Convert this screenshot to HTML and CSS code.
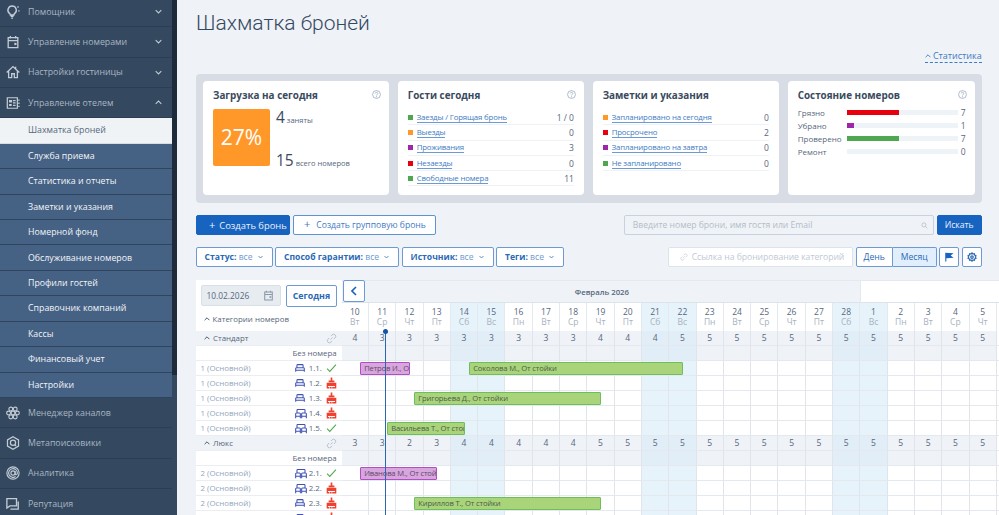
FILE: index.html
```html
<!DOCTYPE html>
<html lang="ru">

<head>
  <meta charset="utf-8">
  <title>Шахматка броней</title>
  <link rel="stylesheet" href="styles.css">
</head>

<body>
  <svg class="sprite" width="0" height="0">
    <symbol id="i-bulb" viewBox="0 0 16 16"><path d="M7 1.200a4.800 4.800 0 0 0-2.800 8.700c.5.4.8.9.8 1.500h4c0-.6.3-1.100.8-1.500A4.800 4.800 0 0 0 7 1.200zM5.300 13h3.400M6 15h2" fill="none" stroke="currentColor" stroke-width="1.600"/><path d="M13 1.500h1.500V3H13zM14 6h1.500v1.500H14z" fill="currentColor"/></symbol>
    <symbol id="i-cal" viewBox="0 0 16 16"><path d="M2.500 3h11v11.500h-11zM2.500 6.500h11M5 1v3M11 1v3" fill="none" stroke="currentColor" stroke-width="1.500"/><path d="M9.500 9h2.500v2.500H9.500z" fill="currentColor"/></symbol>
    <symbol id="i-house" viewBox="0 0 16 16"><path d="M.8 8.500 8 1.800l7.200 6.700M3 7v7.500h3.500V10h3v4.500H13V7M11 2v2.500" fill="none" stroke="currentColor" stroke-width="1.500"/></symbol>
    <symbol id="i-board" viewBox="0 0 16 16"><path d="M1.500 2h11.500v12H1.500z" fill="none" stroke="currentColor" stroke-width="1.400"/><path d="M3.500 4.500h3.500v3H3.500zM8 4.500h3v1.500H8zM8 7h3v1.500H8zM3.500 9h3v2.500h-3zM8 10h3v1.500H8zM14 4h1.500v1.500H14zM14 7.500h1.500V9H14zM14 11h1.500v1.500H14z" fill="currentColor"/></symbol>
    <symbol id="i-net" viewBox="0 0 16 16"><g fill="none" stroke="currentColor" stroke-width="1.300"><circle cx="5.500" cy="3.500" r="2.200"/><circle cx="10.500" cy="3.500" r="2.200"/><circle cx="3" cy="8" r="2.200"/><circle cx="8" cy="8" r="2.200"/><circle cx="13" cy="8" r="2.200"/><circle cx="5.500" cy="12.500" r="2.200"/><circle cx="10.500" cy="12.500" r="2.200"/></g></symbol>
    <symbol id="i-hex" viewBox="0 0 16 16"><path d="M8 .8l6.300 3.600v7.200L8 15.200l-6.300-3.600V4.400z" fill="none" stroke="currentColor" stroke-width="1.400"/><circle cx="8" cy="7.800" r="3" fill="none" stroke="currentColor" stroke-width="1.400"/><path d="M10 10l1.500 1.500" stroke="currentColor" stroke-width="1.400"/></symbol>
    <symbol id="i-at" viewBox="0 0 16 16"><g fill="none" stroke="currentColor" stroke-width="1.300"><circle cx="8" cy="8" r="7"/><circle cx="8" cy="8" r="2.400"/><path d="M10.400 5.800v3c0 1.700 2.600 1.700 2.600-.8A5 5 0 1 0 11 12"/></g></symbol>
    <symbol id="i-chat" viewBox="0 0 16 16"><path d="M1 1.800h11v8.400H4.500L1 12.500zM14 5v8.800h-9" fill="none" stroke="currentColor" stroke-width="1.500"/></symbol>
    <symbol id="i-help" viewBox="0 0 16 16"><circle cx="8" cy="8" r="7" fill="none" stroke="currentColor" stroke-width="1.200"/><path d="M5.800 6.200C5.800 3.500 10.300 3.500 10.300 6.200c0 1.800-2.300 1.800-2.300 3.600" fill="none" stroke="currentColor" stroke-width="1.200"/><circle cx="8" cy="11.800" r=".9" fill="currentColor"/></symbol>
    <symbol id="i-link" viewBox="0 0 16 16"><path d="M6.500 9.500l3-3M7 4.500l1.800-1.800a3 3 0 0 1 4.400 4.300L11.400 8.800M9 11.500l-1.800 1.800A3 3 0 0 1 2.800 9l1.800-1.800" fill="none" stroke="currentColor" stroke-width="1.400"/></symbol>
    <symbol id="i-bed" viewBox="0 0 16 13"><path d="M3 6V2a1 1 0 0 1 1-1h8a1 1 0 0 1 1 1v4M1 12.500V7.500A1.500 1.500 0 0 1 2.500 6h11A1.500 1.500 0 0 1 15 7.500v5M1 10h14" fill="none" stroke="currentColor" stroke-width="1.700"/></symbol>
    <symbol id="i-beds" viewBox="0 0 18 16"><path d="M3 7V3a1 1 0 0 1 1-1h10a1 1 0 0 1 1 1v4M1 15V8.500A1.200 1.200 0 0 1 2.200 7.300h4.600A1.200 1.200 0 0 1 8 8.500V15M10 15V8.500a1.200 1.200 0 0 1 1.200-1.200h4.600A1.200 1.200 0 0 1 17 8.500V15M1 12h7M10 12h7" fill="none" stroke="currentColor" stroke-width="1.600"/></symbol>
    <symbol id="i-broom" viewBox="0 0 16 16"><path d="M6.800 0h2.400v4.500h3V7H3.800V4.500h3zM1 7.800h14V16H1z" fill="#f0402f"/><path d="M3 12.500h10v1.400H3zM4.500 14h1.200v2H4.500zM8 14h1.200v2H8z" fill="#fff"/></symbol>
    <symbol id="i-check" viewBox="0 0 16 16"><path d="M1.500 9l4 4L14.500 3" fill="none" stroke="#55a84f" stroke-width="1.500"/></symbol>
    <symbol id="i-chev" viewBox="0 0 10 6"><path d="M1 1l4 4 4-4" fill="none" stroke="currentColor" stroke-width="1.500"/></symbol>
    <symbol id="i-up" viewBox="0 0 10 6"><path d="M1 5l4-4 4 4" fill="none" stroke="currentColor" stroke-width="1.500"/></symbol>
  </svg>

  <aside class="sidebar">
    <nav class="nav">
      <a class="nav-item"><svg class="nav-icon"><use href="#i-bulb"/></svg>Помощник<svg class="nav-arrow"><use href="#i-chev"/></svg></a>
      <a class="nav-item"><svg class="nav-icon"><use href="#i-cal"/></svg>Управление номерами<svg class="nav-arrow"><use href="#i-chev"/></svg></a>
      <a class="nav-item"><svg class="nav-icon"><use href="#i-house"/></svg>Настройки гостиницы<svg class="nav-arrow"><use href="#i-chev"/></svg></a>
      <a class="nav-item"><svg class="nav-icon"><use href="#i-board"/></svg>Управление отелем<svg class="nav-arrow"><use href="#i-up"/></svg></a>
      <a class="nav-sub active">Шахматка броней</a>
      <a class="nav-sub">Служба приема</a>
      <a class="nav-sub">Статистика и отчеты</a>
      <a class="nav-sub">Заметки и указания</a>
      <a class="nav-sub">Номерной фонд</a>
      <a class="nav-sub">Обслуживание номеров</a>
      <a class="nav-sub">Профили гостей</a>
      <a class="nav-sub">Справочник компаний</a>
      <a class="nav-sub">Кассы</a>
      <a class="nav-sub">Финансовый учет</a>
      <a class="nav-sub">Настройки</a>
      <a class="nav-item"><svg class="nav-icon"><use href="#i-net"/></svg>Менеджер каналов</a>
      <a class="nav-item"><svg class="nav-icon"><use href="#i-hex"/></svg>Метапоисковики</a>
      <a class="nav-item"><svg class="nav-icon"><use href="#i-at"/></svg>Аналитика</a>
      <a class="nav-item"><svg class="nav-icon"><use href="#i-chat"/></svg>Репутация</a>
    </nav>
    <div class="scrollbar"></div>
  </aside>

  <main class="main">
    <h1 class="title">Шахматка броней</h1>
    <div class="stats-toggle"><a><svg class="stats-arrow"><use href="#i-up"/></svg>Статистика</a></div>

    <section class="stats">
      <div class="card">
        <svg class="help"><use href="#i-help"/></svg>
        <h3>Загрузка на сегодня</h3>
        <div class="load">
          <div class="load-box">27%</div>
          <div class="load-nums">
            <div><b>4</b> заняты</div>
            <div><b>15</b> всего номеров</div>
          </div>
        </div>
      </div>
      <div class="card">
        <svg class="help"><use href="#i-help"/></svg>
        <h3>Гости сегодня</h3>
        <ul class="list">
          <li><i class="green"></i><a>Заезды / Горящая бронь</a><span>1 / 0</span></li>
          <li><i class="orange"></i><a>Выезды</a><span>0</span></li>
          <li><i class="purple"></i><a>Проживания</a><span>3</span></li>
          <li><i class="red"></i><a>Незаезды</a><span>0</span></li>
          <li><i class="green"></i><a>Свободные номера</a><span>11</span></li>
        </ul>
      </div>
      <div class="card">
        <h3>Заметки и указания</h3>
        <ul class="list">
          <li><i class="orange"></i><a>Запланировано на сегодня</a><span>0</span></li>
          <li><i class="red"></i><a>Просрочено</a><span>2</span></li>
          <li><i class="purple"></i><a>Запланировано на завтра</a><span>0</span></li>
          <li><i class="green"></i><a>Не запланировано</a><span>0</span></li>
        </ul>
      </div>
      <div class="card">
        <svg class="help"><use href="#i-help"/></svg>
        <h3>Состояние номеров</h3>
        <div class="state"><span>Грязно</span><div class="bar"><i class="red" style="width:47%"></i></div><span>7</span></div>
        <div class="state"><span>Убрано</span><div class="bar"><i class="purple" style="width:7%"></i></div><span>1</span></div>
        <div class="state"><span>Проверено</span><div class="bar"><i class="green" style="width:47%"></i></div><span>7</span></div>
        <div class="state"><span>Ремонт</span><div class="bar"></div><span>0</span></div>
      </div>
    </section>

    <div class="toolbar">
      <button class="btn primary create"><span class="plus">+</span>Создать бронь</button>
      <button class="btn outline group"><span class="plus">+</span>Создать групповую бронь</button>
      <div class="search">
        Введите номер брони, имя гостя или Email
        <svg class="search-icon" viewBox="0 0 12 12"><circle cx="5" cy="5" r="3.500" fill="none" stroke="currentColor" stroke-width="1.300"/><path d="M7.500 7.500L11 11" stroke="currentColor" stroke-width="1.300"/></svg>
      </div>
      <button class="btn primary find">Искать</button>
    </div>

    <div class="toolbar filters">
      <button class="filter"><b>Статус:</b> все<svg class="filter-arrow"><use href="#i-chev"/></svg></button>
      <button class="filter"><b>Способ гарантии:</b> все<svg class="filter-arrow"><use href="#i-chev"/></svg></button>
      <button class="filter"><b>Источник:</b> все<svg class="filter-arrow"><use href="#i-chev"/></svg></button>
      <button class="filter"><b>Теги:</b> все<svg class="filter-arrow"><use href="#i-chev"/></svg></button>
      <button class="cat-link"><svg class="cat-icon"><use href="#i-link"/></svg>Ссылка на бронирование категорий</button>
      <div class="switch"><button>День</button><button class="on">Месяц</button></div>
      <button class="square">
        <svg viewBox="0 0 12 12"><path d="M1.500 1v10.500h1.300V7.500L11.500 7 8 4.200 11.500 1.500z" fill="#1763c0"/></svg>
      </button>
      <button class="square">
        <svg viewBox="0 0 16 16"><g fill="none" stroke="#2a69b5" stroke-width="2"><path d="M8 1.500l1.500 1.700 2.200-.4.500 2.200 2.100 1L13.400 8l1 2-2.100 1-.5 2.200-2.200-.4L8 14.500l-1.500-1.700-2.200.4-.5-2.200-2.100-1 1-2-1-2 2.100-1 .5-2.200 2.200.4z"/><circle cx="8" cy="8" r="2"/></g></svg>
      </button>
    </div>

    <section class="sched" id="sched">
      <div class="sched-top">
        <div class="sched-tools">
          <div class="date-row">
            <div class="date">10.02.2026
              <svg class="date-icon"><use href="#i-cal"/></svg>
            </div>
            <button class="today">Сегодня</button>
          </div>
          <div class="cat-title"><svg class="fold"><use href="#i-up"/></svg>Категории номеров</div>
        </div>
        <div class="sched-head">
          <div class="months">
            <button class="back"><svg viewBox="0 0 6 10"><path d="M5 1L1 5l4 4" fill="none" stroke="#1763c0" stroke-width="1.600"/></svg></button>
            <div class="month">Февраль 2026</div>
            <div class="month-next"></div>
          </div>
          <div class="days" id="days"></div>
        </div>
      </div>
      <div id="rows"></div>
      <div class="now"></div>
    </section>
  </main>

  <script src="app.js"></script>
</body>

</html>
```

FILE: styles.css
```css
* {
  box-sizing: border-box;
}

html,
body {
  height: 515px;
  margin: 0;
  overflow: hidden;
}

body {
  display: flex;
  background-color: #eff2f6;
  font-family: "Open Sans", sans-serif;
  font-size: 9px;
  color: #3a4a5e;
}

a {
  color: inherit;
}

button {
  font-family: inherit;
  cursor: pointer;
}

.sprite {
  position: absolute;
}

/* sidebar */

.sidebar {
  display: flex;
  flex: 0 0 177px;
  height: 515px;
  background-color: #34495f;
}

.nav {
  width: 172px;
  margin-top: -3px;
}

.nav-item {
  display: flex;
  align-items: center;
  height: 30.3px;
  padding-left: 6px;
  border-bottom: 1px solid #2b3e53;
  font-size: 8.800px;
  color: #a9b5c3;
}

.nav-icon {
  width: 14px;
  height: 14px;
  margin-right: 8px;
  color: #c3ccd6;
}

.nav-arrow {
  width: 7px;
  height: 5px;
  margin-left: auto;
  margin-right: 10px;
  color: #c3ccd6;
}

.nav-sub {
  display: flex;
  align-items: center;
  height: 25.45px;
  padding-left: 28px;
  border-bottom: 1px solid #2f455f;
  background-color: #456184;
  font-size: 8.800px;
  font-weight: 500;
  color: #f2f5f8;
}

.nav-sub.active {
  background-color: #f0f3f6;
  border-bottom-color: #d8dde4;
  font-weight: 400;
  color: #56677c;
}

.scrollbar {
  width: 5px;
  height: 375px;
  background-color: #1e2b3a;
}

/* main */

.main {
  flex: 1;
  min-width: 0;
  padding: 0 17.300px 0 18.500px;
}

.title {
  height: 50px;
  margin: 0;
  padding: 8px 0 0 .5px;
  font-family: Roboto, sans-serif;
  font-size: 21px;
  font-weight: 300;
  line-height: 30px;
  color: #34495f;
}

.stats-toggle {
  display: flex;
  justify-content: flex-end;
  height: 24px;
}

.stats-toggle a {
  height: 13px;
  border-bottom: 1px dashed #3e7bc4;
  font-size: 9px;
  line-height: 11px;
  color: #3e7bc4;
}

.stats-arrow {
  width: 6px;
  height: 4px;
  margin: 0 2px 1px 0;
}

.stats {
  display: grid;
  grid-template-columns: 186px 186.300px 186.300px 187px;
  gap: 8.700px;
  width: 786.200px;
  height: 129px;
  padding: 7px 7.500px;
  border-radius: 4px;
  background-color: #d8dce4;
}

.card {
  position: relative;
  height: 114px;
  padding: 8px 10px 0;
  border-radius: 4px;
  background-color: #fff;
}

.card h3 {
  margin: 0 0 8px;
  font-size: 9.900px;
  font-weight: 700;
  line-height: 13px;
  color: #3a4a5e;
}

.help {
  position: absolute;
  top: 9px;
  right: 8px;
  width: 9px;
  height: 9px;
  color: #8b9db3;
}

.load {
  display: flex;
  margin-top: -1px;
}

.load-box {
  flex: 0 0 57px;
  height: 57px;
  border-radius: 2px;
  background-color: #ff9829;
  font-size: 21px;
  line-height: 57px;
  text-align: center;
  color: #fff;
}

.load-nums {
  display: flex;
  flex-direction: column;
  justify-content: space-between;
  height: 59px;
  padding-left: 6px;
  font-size: 7.500px;
  color: #56677c;
}

.load-nums b {
  font-size: 15.500px;
  font-weight: 400;
  line-height: 16px;
  color: #3a4a5e;
}

.list {
  margin: 0;
  padding: 0;
  list-style: none;
}

.list li {
  display: flex;
  align-items: center;
  height: 15.3px;
  border-bottom: 1px solid #eef2f6;
  font-size: 8.500px;
}

.list i {
  flex: 0 0 5px;
  height: 5px;
  margin-right: 4px;
}

.list a {
  border-bottom: 1px solid #6d9ad3;
  font-size: 7.800px;
  letter-spacing: -.15px;
  line-height: 10px;
  color: #3e7bc4;
}

.list span {
  margin-left: auto;
  color: #56677c;
}

.green {
  background-color: #4fa84f;
}

.orange {
  background-color: #ff9829;
}

.purple {
  background-color: #9c27a8;
}

.red {
  background-color: #e8000e;
}

.state {
  position: relative;
  top: -4px;
  display: flex;
  align-items: center;
  height: 13px;
  font-size: 8px;
  color: #56677c;
}

.state span:first-child {
  flex: 0 0 49px;
}

.state span:last-child {
  margin-left: 3px;
  font-size: 8.500px;
}

.bar {
  flex: 0 0 111px;
  height: 5px;
  background-color: #eef3f8;
}

.bar i {
  display: block;
  height: 5px;
}

/* toolbars */

.toolbar {
  display: flex;
  align-items: center;
  gap: 2.500px;
  margin-top: 12px;
}

.btn {
  height: 20px;
  padding: 0;
  border-radius: 2px;
  font-size: 8.600px;
  text-align: left;
}

.primary {
  border: 1px solid #1763c0;
  background-color: #1763c0;
  color: #e9f1fa;
}

.outline {
  border: 1px solid #5b93d3;
  background-color: #fff;
  color: #3e7bc4;
}

.create {
  width: 94.500px;
  padding-left: 12.500px;
  font-size: 9.400px;
}

.create .plus {
  margin-right: 4px;
}

.group {
  width: 143px;
  padding-left: 10.500px;
}

.plus {
  margin-right: 6px;
  font-size: 11px;
  line-height: 10px;
}

.search {
  display: flex;
  align-items: center;
  justify-content: space-between;
  width: 310.500px;
  height: 20px;
  margin-left: auto;
  padding: 0 5px 0 8px;
  border: 1px solid #c8d2de;
  border-radius: 2px;
  font-size: 8.600px;
  color: #b3bdc9;
}

.search-icon {
  width: 7px;
  height: 7px;
  color: #b3bdc9;
}

.find {
  width: 45px;
  text-align: center;
}

.filter {
  height: 20px;
  padding: 0 9px 0 8px;
  border: 1px solid #6d9ad3;
  border-radius: 2px;
  background-color: #fff;
  font-size: 8.600px;
  color: #6d9ad3;
  white-space: nowrap;
}

.filter b {
  font-weight: 700;
  color: #2a69b5;
}

.filter-arrow {
  width: 5px;
  height: 4px;
  margin-left: 5px;
  margin-bottom: 1px;
  color: #2a69b5;
}

.cat-link {
  display: flex;
  align-items: center;
  width: 185.500px;
  height: 20px;
  margin-left: auto;
  padding: 0 0 0 11px;
  border: 1px solid #dde3ea;
  border-radius: 2px;
  background-color: #fff;
  font-size: 8.600px;
  color: #c0c9d4;
  white-space: nowrap;
}

.cat-icon {
  flex: none;
  width: 8px;
  height: 8px;
  margin-right: 4px;
  color: #c0c9d4;
}

.switch {
  display: flex;
}

.switch button {
  width: 37px;
  height: 20px;
  padding: 0;
  border: 1px solid #6d9ad3;
  border-radius: 2px 0 0 2px;
  background-color: #fff;
  font-size: 8.600px;
  color: #2a69b5;
}

.switch .on {
  width: 44px;
  border-left: 0;
  border-radius: 0 2px 2px 0;
  background-color: #e0effb;
}

.square {
  width: 20px;
  height: 20px;
  padding: 0 4px;
  border: 1px solid #6d9ad3;
  border-radius: 2px;
  background-color: #fff;
}

.square svg {
  display: block;
  width: 10px;
  height: 10px;
}

/* scheduler */

.sched {
  position: relative;
  width: 804px;
  margin-top: 13px;
}

.sched-top {
  display: flex;
  height: 51px;
}

.sched-tools {
  flex: 0 0 146.200px;
  padding: 5px 5px 0;
  background-color: #fff;
}

.date-row {
  display: flex;
  justify-content: space-between;
}

.date {
  display: flex;
  align-items: center;
  justify-content: space-between;
  width: 80px;
  height: 21px;
  padding: 0 6px 0 5px;
  border: 1px solid #d8dfe7;
  border-radius: 2px;
  background-color: #e7ecf1;
  font-size: 8.400px;
  color: #56677c;
}

.date-icon {
  width: 11px;
  height: 11px;
  color: #8b98a8;
}

.today {
  width: 50.500px;
  height: 22px;
  padding: 0;
  border: 1px solid #6d9ad3;
  border-radius: 2px;
  background-color: #fff;
  font-size: 8.800px;
  font-weight: 700;
  color: #2a69b5;
}

.cat-title {
  display: flex;
  align-items: center;
  margin-top: 7px;
  padding-left: 3px;
  font-size: 7.900px;
  color: #56677c;
}

.fold {
  flex: none;
  width: 6px;
  height: 4px;
  margin-right: 3px;
  color: #3a4a5e;
}

.sched-head {
  flex: none;
  width: 658px;
}

.months {
  display: flex;
  height: 23px;
  border-top: 1px solid #e4e8ef;
  border-bottom: 1px solid #dde3ea;
}

.back {
  flex: none;
  width: 22px;
  height: 22px;
  margin: -1px 0 0 1px;
  padding: 0 7px;
  border: 1px solid #6d9ad3;
  border-radius: 2px;
  background-color: #fff;
}

.back svg {
  display: block;
  width: 6px;
  height: 10px;
}

.month {
  flex: 0 0 495.700px;
  padding-left: 210px;
  font-size: 7.800px;
  font-weight: 600;
  line-height: 22px;
  color: #56677c;
}

.month-next {
  flex: 1;
  border-left: 1px solid #e4e8ef;
  background-color: #fff;
}

.days {
  display: flex;
  height: 28px;
}

.day {
  flex: 0 0 27.300px;
  padding-top: 4px;
  border-right: 1px solid #e4e8ef;
  background-color: #fff;
  font-size: 8.500px;
  line-height: 10px;
  text-align: center;
  color: #56677c;
}

.day small {
  display: block;
  font-size: 8.500px;
  color: #a6b2bf;
}

.day.off {
  background-color: #e6f3fb;
}

.row {
  display: flex;
  height: 15px;
}

.row-label {
  display: flex;
  flex: 0 0 146.200px;
  align-items: center;
  padding: 0 5px;
  border-bottom: 1px solid #eaeef3;
  background-color: #fff;
  font-size: 7.900px;
  color: #93a6bc;
}

.row-room {
  display: flex;
  align-items: center;
  margin-left: auto;
  color: #56677c;
}

.row-room .bed {
  width: 10px;
  height: 8px;
  margin-right: 4px;
  color: #3f51b5;
}

.row-room .beds {
  width: 12px;
  height: 11px;
  margin-right: 2px;
  color: #3f51b5;
}

.row-room .num {
  width: 17px;
}

.row-room .status {
  width: 11px;
  height: 12px;
}

.row-plain {
  justify-content: flex-end;
  color: #56677c;
}

.row-head .row-label {
  padding-left: 8.500px;
  background-color: #eff2f6;
  color: #56677c;
}

.row-link {
  flex: none;
  width: 11px;
  height: 11px;
  margin-left: auto;
  color: #b4c0cd;
}

.cells {
  position: relative;
  display: flex;
  flex: none;
  width: 658px;
}

.cell {
  flex: 0 0 27.300px;
  border-right: 1px solid #e0e5ec;
  border-bottom: 1px solid #e4e8ef;
  background-color: #fff;
  font-size: 8.500px;
  line-height: 14px;
  text-align: center;
  color: #56677c;
}

.cell.off {
  background-color: #e6f3fb;
}

.cell.grey {
  background-color: #eff2f6;
}

.cell.grey.off {
  background-color: #e2eef7;
}

.booking {
  position: absolute;
  top: 1px;
  height: 13px;
  padding-left: 3px;
  overflow: hidden;
  border-radius: 1px;
  font-size: 7.600px;
  letter-spacing: -.15px;
  line-height: 11px;
  white-space: nowrap;
  color: #4d5b4f;
}

.booking.live {
  border: 1px solid #ae4fc2;
  background-color: #d8a5df;
  color: #5b4a66;
}

.booking.done {
  border: 1px solid #6dbf5d;
  background-color: #a9d479;
}

.now {
  position: absolute;
  top: 49px;
  bottom: -100px;
  left: 189.500px;
  width: 1px;
  background-color: #2c66b0;
}

.now::before {
  content: "";
  position: absolute;
  top: 0;
  left: -2px;
  width: 5px;
  height: 5px;
  border-radius: 50%;
  background-color: #1554a8;
}
```

FILE: app.js
```js
'use strict';

const days = [
  [10, 'Вт'], [11, 'Ср'], [12, 'Чт'], [13, 'Пт'], [14, 'Сб'], [15, 'Вс'], [16, 'Пн'],
  [17, 'Вт'], [18, 'Ср'], [19, 'Чт'], [20, 'Пт'], [21, 'Сб'], [22, 'Вс'], [23, 'Пн'],
  [24, 'Вт'], [25, 'Ср'], [26, 'Чт'], [27, 'Пт'], [28, 'Сб'], [1, 'Вс'], [2, 'Пн'],
  [3, 'Вт'], [4, 'Ср'], [5, 'Чт']
];

function isOff(day) {
  return day[1] === 'Сб' || day[1] === 'Вс';
}

function fives(list) {
  return list.concat(new Array(days.length - list.length).fill(5));
}

const groups = [
  {
    name: 'Стандарт',
    category: 1,
    counts: fives([4, 3, 3, 3, 3, 3, 3, 3, 3, 4, 4, 4]),
    rooms: [
      { num: '1.1.', bed: 'bed', clean: true, bookings: [['live', 18.5, 50, 'Петров И., От стойки'], ['done', 127.5, 214, 'Соколова М., От стойки']] },
      { num: '1.2.', bed: 'bed' },
      { num: '1.3.', bed: 'bed', bookings: [['done', 72.6, 187, 'Григорьева Д., От стойки']] },
      { num: '1.4.', bed: 'beds' },
      { num: '1.5.', bed: 'beds', clean: true, bookings: [['done', 45.6, 77.5, 'Васильева Т., От стойки']] }
    ]
  },
  {
    name: 'Люкс',
    category: 2,
    counts: fives([3, 3, 2, 3, 4, 4, 4, 4, 4]),
    rooms: [
      { num: '2.1.', bed: 'beds', clean: true, bookings: [['live', 18.5, 77, 'Иванова М., От стойки']] },
      { num: '2.2.', bed: 'beds' },
      { num: '2.3.', bed: 'bed', bookings: [['done', 72.6, 187, 'Кириллов Т., От стойки']] },
      { num: '2.4.', bed: 'bed' }
    ]
  }
];

function cells(fill) {
  return days.map((day, i) => fill(isOff(day) ? ' off' : '', i)).join('') + '<div class="cell"></div>';
}

function bookingHtml(b) {
  return '<div class="booking ' + b[0] + '" style="left:' + b[1] + 'px;width:' + b[2] + 'px">' + b[3] + '</div>';
}

function roomRow(group, room) {
  const status = room.clean ? '#i-check' : '#i-broom';
  let html = '<div class="row"><div class="row-label">' + group.category + ' (Основной)';
  html += '<span class="row-room"><svg class="' + room.bed + '"><use href="#i-' + room.bed + '"/></svg>';
  html += '<span class="num">' + room.num + '</span>';
  html += '<svg class="status"><use href="' + status + '"/></svg></span></div>';
  html += '<div class="cells">' + cells(off => '<div class="cell' + off + '"></div>');
  html += (room.bookings || []).map(bookingHtml).join('');
  return html + '</div></div>';
}

function groupRows(group) {
  let html = '<div class="row row-head"><div class="row-label"><svg class="fold"><use href="#i-up"/></svg>' + group.name;
  html += '<svg class="row-link"><use href="#i-link"/></svg></div>';
  html += '<div class="cells">' + cells((off, i) => '<div class="cell grey' + off + '">' + group.counts[i] + '</div>') + '</div></div>';
  html += '<div class="row"><div class="row-label row-plain">Без номера</div>';
  html += '<div class="cells">' + cells(off => '<div class="cell grey' + off + '"></div>') + '</div></div>';
  return html + group.rooms.map(room => roomRow(group, room)).join('');
}

document.getElementById('days').innerHTML = days.map(day => {
  return '<div class="day' + (isOff(day) ? ' off' : '') + '">' + day[0] + '<small>' + day[1] + '</small></div>';
}).join('') + '<div class="day"></div>';

document.getElementById('rows').innerHTML = groups.map(groupRows).join('');
```
